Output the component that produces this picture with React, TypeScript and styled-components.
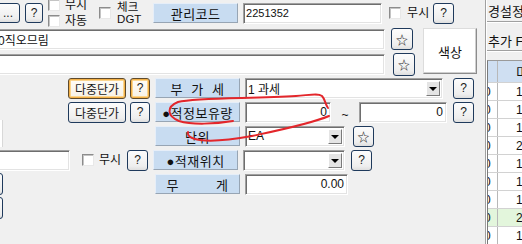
import React from 'react';
import styled, { createGlobalStyle, css } from 'styled-components';

const GlobalStyle = createGlobalStyle`
  html, body {
    margin: 0;
    padding: 0;
    background: #f0f0f0;
  }
  body {
    font-family: "Liberation Sans", "Noto Sans CJK KR", sans-serif;
    font-size: 12px;
    color: #111;
  }
`;

type Spaced = { $ml?: number };

const spaced = css<Spaced>`
  flex: none;
  margin-left: ${(p) => p.$ml ?? 0}px;
`;

const Screen = styled.div`
  position: relative;
  width: 522px;
  height: 244px;
  overflow: hidden;
  display: flex;
  background: #f0f0f0;
`;

const FormPane = styled.div`
  width: 485px;
  flex: none;
  overflow: hidden;
  display: flex;
  flex-direction: column;
`;

const Row = styled.div<{ $h?: number; $mt?: number }>`
  display: flex;
  align-items: center;
  flex: none;
  height: ${(p) => p.$h ?? 22}px;
  margin-top: ${(p) => p.$mt ?? 0}px;
`;

const Column = styled.div`
  display: flex;
  flex-direction: column;
  flex: none;
`;

const RoundBtn = styled.div<Spaced & { $w: number; $h?: number; $hot?: boolean }>`
  ${spaced};
  box-sizing: border-box;
  width: ${(p) => p.$w}px;
  height: ${(p) => p.$h ?? 21}px;
  border: 1px solid #1f3a5c;
  border-radius: 3px;
  background: linear-gradient(#fcfcfc, #eeeeee 80%, #dedede);
  display: flex;
  align-items: center;
  justify-content: center;
  font-size: 12px;
  color: #1a1a1a;
  white-space: nowrap;
  ${(p) =>
    p.$hot &&
    css`
      border-color: #5e4a2c;
      background: linear-gradient(#fffdf8, #f7f1e6);
      box-shadow: inset 0 0 0 1px #f3b047, inset 0 0 0 2px #fbd68f;
    `}
`;

const Check = styled.span<Spaced>`
  ${spaced};
  box-sizing: border-box;
  width: 12px;
  height: 12px;
  background: #fff;
  border: 1px solid;
  border-color: #8c8c8c #e8e8e8 #e8e8e8 #8c8c8c;
  box-shadow: inset 1px 1px 0 #c4c4c4;
`;

const Caption = styled.span<Spaced>`
  ${spaced};
  font-size: 12px;
  line-height: 14px;
  white-space: nowrap;
`;

const CheckStack = styled.div<Spaced>`
  ${spaced};
  display: flex;
  flex-direction: column;
  gap: 2px;
`;

const CheckLine = styled.div`
  display: flex;
  align-items: center;
  gap: 5px;
  height: 14px;
`;

const StackText = styled.div<Spaced>`
  ${spaced};
  width: 25px;
  display: flex;
  flex-direction: column;
  font-size: 11.5px;
  line-height: 12px;
`;

const FieldLabel = styled.div<Spaced>`
  ${spaced};
  box-sizing: border-box;
  width: 85px;
  height: 20px;
  background: #c8dcf1;
  border: 1px solid;
  border-color: #e6eef8 #97a5b4 #97a5b4 #e6eef8;
  display: flex;
  align-items: center;
  justify-content: center;
  font-size: 13px;
  letter-spacing: 0.5px;
  color: #111;
  white-space: pre;
`;

const TextBox = styled.div<Spaced & { $w: number; $h?: number; $right?: boolean; $small?: boolean }>`
  ${spaced};
  box-sizing: border-box;
  width: ${(p) => p.$w}px;
  height: ${(p) => p.$h ?? 21}px;
  background: #fff;
  border: 1px solid;
  border-color: #a0a0a0 #fff #fff #a0a0a0;
  box-shadow: inset 1px 1px 0 #6e6e6e, inset -1px -1px 0 #e3e3e3;
  display: flex;
  align-items: center;
  justify-content: ${(p) => (p.$right ? 'flex-end' : 'flex-start')};
  padding: 0 3px 0 2px;
  font-size: ${(p) => (p.$small ? 11 : 12)}px;
  white-space: pre;
  overflow: hidden;
`;

const SelectBox = styled(TextBox)`
  justify-content: space-between;
  padding-right: 2px;
`;

const DropArrow = styled.span`
  flex: none;
  box-sizing: border-box;
  width: 14px;
  height: 15px;
  background: #e4e4e4;
  border: 1px solid;
  border-color: #fff #7a7a7a #7a7a7a #fff;
  display: flex;
  align-items: center;
  justify-content: center;

  &::after {
    content: '';
    border-left: 4px solid transparent;
    border-right: 4px solid transparent;
    border-top: 4px solid #000;
    margin-top: 1px;
  }
`;

const EdgeBox = styled.div<Spaced & { $w: number }>`
  ${spaced};
  align-self: flex-end;
  box-sizing: border-box;
  width: ${(p) => p.$w}px;
  height: 27px;
  background: #f4f4f4;
  border-right: 1px solid #d8d8d8;
  box-shadow: inset -2px 0 0 #fff;
`;

const Tilde = styled.span`
  flex: none;
  width: 28px;
  text-align: center;
  font-size: 12px;
  padding-top: 5px;
`;

const ColorBtn = styled.div<Spaced>`
  ${spaced};
  align-self: flex-start;
  box-sizing: border-box;
  width: 54px;
  height: 46px;
  background: #fff;
  border: 1px solid;
  border-color: #dcdcdc #8c8c8c #8c8c8c #dcdcdc;
  box-shadow: inset -1px -1px 0 #cfcfcf;
  display: flex;
  align-items: center;
  justify-content: center;
  font-size: 13px;
`;

const SidePane = styled.div`
  flex: 1;
  min-width: 0;
  overflow: hidden;
  border-left: 1px solid #a0a0a0;
  box-shadow: inset 1px 0 0 #fff;
  padding-left: 1px;
  display: flex;
  flex-direction: column;
`;

const TabStrip = styled.div`
  height: 21px;
  flex: none;
  display: flex;
  align-items: center;
  padding-left: 1px;
  font-size: 13px;
  white-space: nowrap;
  border-bottom: 1px solid #a0a0a0;
  box-shadow: 0 1px 0 #fff;
`;

const ToolStrip = styled.div`
  height: 29px;
  flex: none;
  box-sizing: border-box;
  padding: 12px 0 0 1px;
  font-size: 13px;
  line-height: 16px;
  white-space: nowrap;
  border-bottom: 1px solid #a0a0a0;
  box-shadow: 0 1px 0 #fff;
`;

const Grid = styled.div`
  margin-top: 9px;
  border-top: 1px solid #9a9a9a;
  border-left: 1px solid #7a7a7a;
  display: flex;
  flex-direction: column;
`;

const GridRow = styled.div<{ $head?: boolean; $tint?: string }>`
  display: flex;
  flex: none;
  height: ${(p) => (p.$head ? 22 : 18)}px;
  box-sizing: border-box;
  border-bottom: 1px solid #d2d2d2;
  background: ${(p) => (p.$head ? '#cfdff2' : p.$tint ?? '#fff')};
  font-size: ${(p) => (p.$head ? 13 : 12)}px;
`;

const KeyCell = styled.div`
  width: 10px;
  flex: none;
  box-sizing: border-box;
  border-right: 1px solid #b8b8b8;
  overflow: hidden;
  display: flex;
  align-items: center;

  span {
    margin-left: -4px;
  }
`;

const ValueCell = styled.div`
  flex: 1;
  display: flex;
  align-items: center;
  padding-left: 18px;
  white-space: nowrap;
`;

const Scribble = styled.svg`
  position: absolute;
  left: 0;
  top: 0;
  pointer-events: none;
`;

const rows = [
  { v: '1' },
  { v: '1' },
  { v: '1' },
  { v: '2' },
  { v: '1' },
  { v: '1' },
  { v: '1' },
  { v: '2', tint: '#e3f6dc' },
  { v: '1' },
];

export default function App() {
  return (
    <>
      <GlobalStyle />
      <Screen>
        <FormPane>
          <Row $h={26}>
            <RoundBtn $w={24} $h={20} $ml={-4}>...</RoundBtn>
            <RoundBtn $w={18} $h={20} $ml={5}>?</RoundBtn>
            <CheckStack $ml={5}>
              <CheckLine>
                <Check />
                <Caption>무시</Caption>
              </CheckLine>
              <CheckLine>
                <Check />
                <Caption>자동</Caption>
              </CheckLine>
            </CheckStack>
            <Check $ml={12} />
            <StackText $ml={6}>
              <span>체크</span>
              <span>DGT</span>
            </StackText>
            <FieldLabel $ml={11}>관리코드</FieldLabel>
            <TextBox $w={139} $ml={5} $small>2251352</TextBox>
            <Check $ml={7} />
            <Caption $ml={6}>무시</Caption>
            <RoundBtn $w={21} $ml={4}>?</RoundBtn>
          </Row>

          <Row $h={48} $mt={2}>
            <Column>
              <Row>
                <TextBox $w={390} $ml={-5}>0직오므림</TextBox>
                <RoundBtn $w={22} $h={22} $ml={6}>☆</RoundBtn>
              </Row>
              <Row $h={23} $mt={3}>
                <TextBox $w={390} $ml={-5} />
                <RoundBtn $w={22} $h={23} $ml={8}>☆</RoundBtn>
              </Row>
            </Column>
            <ColorBtn $ml={8}>색상</ColorBtn>
          </Row>

          <Row $mt={1}>
            <RoundBtn $w={58} $ml={68} $hot>다중단가</RoundBtn>
            <RoundBtn $w={20} $ml={4} $hot>?</RoundBtn>
            <FieldLabel $ml={5}>{'부  가  세'}</FieldLabel>
            <SelectBox $w={198} $ml={5}>
              <span>1 과세</span>
              <DropArrow />
            </SelectBox>
            <RoundBtn $w={21} $ml={10}>?</RoundBtn>
          </Row>

          <Row $mt={2}>
            <RoundBtn $w={58} $ml={68}>다중단가</RoundBtn>
            <RoundBtn $w={20} $ml={4}>?</RoundBtn>
            <FieldLabel $ml={5}>●적정보유량</FieldLabel>
            <TextBox $w={86} $ml={5} $right>0</TextBox>
            <Tilde>~</Tilde>
            <TextBox $w={88} $right>0</TextBox>
            <RoundBtn $w={21} $ml={6}>?</RoundBtn>
          </Row>

          <Row $mt={2}>
            <EdgeBox $w={43} $ml={-40} />
            <FieldLabel $ml={152}>단위</FieldLabel>
            <SelectBox $w={100} $ml={5}>
              <span>EA</span>
              <DropArrow />
            </SelectBox>
            <RoundBtn $w={21} $ml={8}>☆</RoundBtn>
          </Row>

          <Row $mt={2}>
            <TextBox $w={90} $ml={-20} />
            <Check $ml={12} />
            <Caption $ml={5}>무시</Caption>
            <RoundBtn $w={21} $ml={6}>?</RoundBtn>
            <FieldLabel $ml={5}>●적재위치</FieldLabel>
            <SelectBox $w={102} $ml={5}>
              <span />
              <DropArrow />
            </SelectBox>
            <RoundBtn $w={21} $ml={6}>?</RoundBtn>
          </Row>

          <Row $mt={2}>
            <RoundBtn $w={23} $h={22} $ml={-20} />
            <FieldLabel $ml={152}>{'무         게'}</FieldLabel>
            <TextBox $w={103} $ml={5} $right>0.00</TextBox>
          </Row>

          <Row $mt={2}>
            <RoundBtn $w={23} $h={22} $ml={-20} />
          </Row>
        </FormPane>

        <SidePane>
          <TabStrip>경설정</TabStrip>
          <ToolStrip>추가 F</ToolStrip>
          <Grid>
            <GridRow $head>
              <KeyCell />
              <ValueCell>미</ValueCell>
            </GridRow>
            {rows.map((r, i) => (
              <GridRow key={i} $tint={r.tint}>
                <KeyCell>
                  <span>0</span>
                </KeyCell>
                <ValueCell>{r.v}</ValueCell>
              </GridRow>
            ))}
          </Grid>
        </SidePane>

        <Scribble width="522" height="244" viewBox="0 0 522 244">
          <path
            d="M 233 121 C 215 124, 192 125, 179 121 C 167 116, 166 107, 178 102 C 198 97, 255 99, 296 96 C 310 95, 318 93, 322 96 C 325 99, 325 104, 328 108"
            fill="none"
            stroke="#e3262b"
            strokeWidth="2"
            strokeLinecap="round"
          />
          <path
            d="M 329 116 C 310 124, 280 130, 252 136 C 230 140, 206 142, 195 139 C 190 138, 187 135, 188 132"
            fill="none"
            stroke="#e3262b"
            strokeWidth="2"
            strokeLinecap="round"
          />
        </Scribble>
      </Screen>
    </>
  );
}
